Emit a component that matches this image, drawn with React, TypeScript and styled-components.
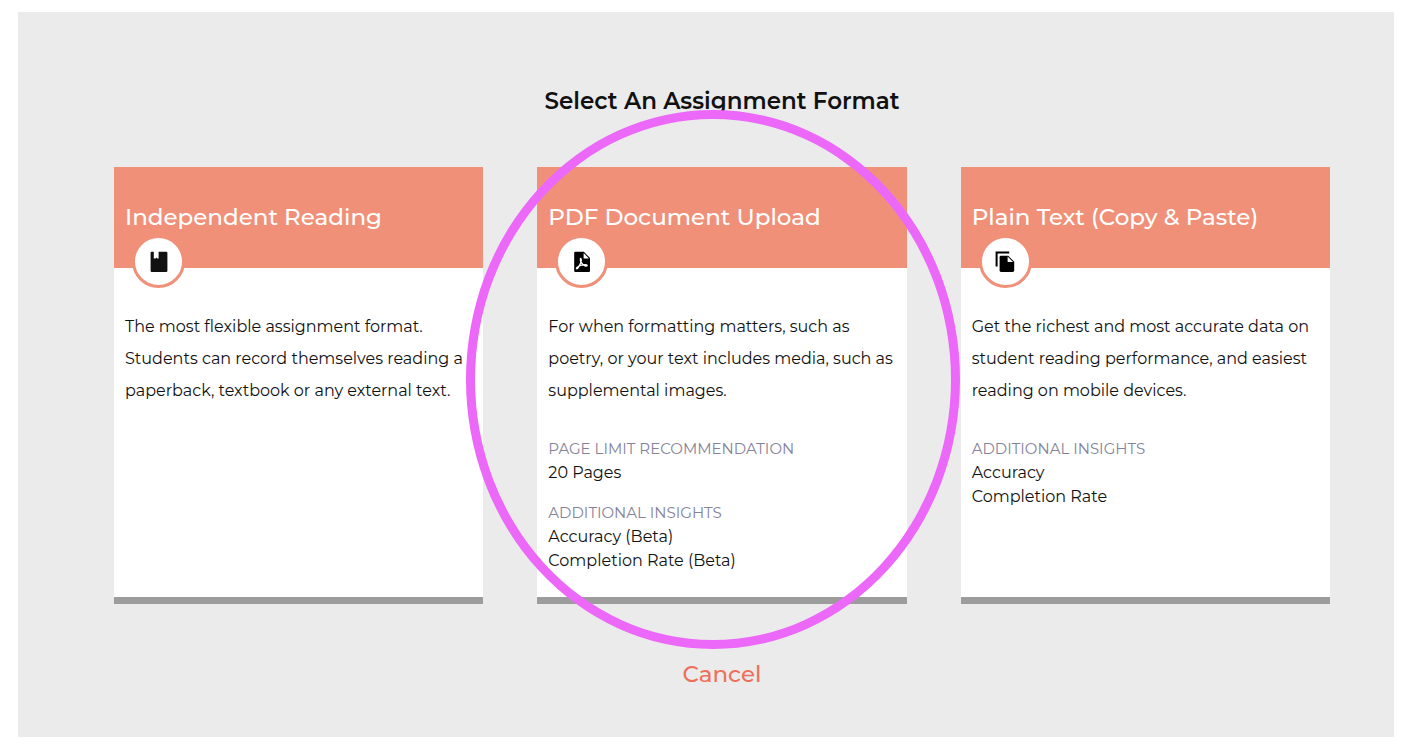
import React from 'react';
import styled, { createGlobalStyle } from 'styled-components';

const GlobalStyle = createGlobalStyle`
  * { box-sizing: border-box; }
  body {
    margin: 0;
    background: #fff;
    color: #111;
    font-family: Metropolis, Montserrat, Inter, sans-serif;
    font-size: 16px;
  }
  h1, h2, p, dl, dt, dd { margin: 0; }
`;

const Page = styled.main`
  margin: 12px 12px 11px 18px;
  padding: 73px 64px 46px 96px;
  background: #ebebeb;
`;

const Heading = styled.h1`
  font-size: 23px;
  font-weight: 600;
  line-height: 32px;
  text-align: center;
`;

const Cards = styled.div`
  display: grid;
  grid-template-columns: repeat(3, minmax(0, 1fr));
  gap: 54px;
  margin-top: 50px;
`;

const Card = styled.article`
  position: relative;
  min-height: 437px;
  background: #fff;
  border-bottom: 7px solid #9c9c9c;
`;

const CardHeader = styled.header`
  position: relative;
  height: 101px;
  padding: 34px 11px;
  background: #f19078;
  color: #fff;
`;

const CardTitle = styled.h2`
  font-size: 23px;
  font-weight: 500;
  line-height: 32px;
  white-space: nowrap;
`;

const Badge = styled.span`
  position: absolute;
  left: 18px;
  bottom: -20px;
  display: flex;
  align-items: center;
  justify-content: center;
  width: 53px;
  height: 53px;
  background: #fff;
  border: 3px solid #f19078;
  border-radius: 50%;
`;

const CardBody = styled.div`
  padding: 43px 11px 22px;
`;

const Description = styled.p`
  line-height: 32px;
`;

const Details = styled.dl`
  display: grid;
  gap: 16px;
  margin-top: 30px;
  line-height: 24px;
`;

const Term = styled.dt`
  color: #85839a;
  font-size: 15px;
  text-transform: uppercase;
`;

const Highlight = styled.span`
  position: absolute;
  z-index: 1;
  top: -57px;
  right: -53px;
  bottom: -52px;
  left: -71px;
  border: 9px solid #ec68f8;
  border-radius: 50%;
  pointer-events: none;
`;

const Cancel = styled.button`
  display: block;
  margin: 54px auto 0;
  padding: 0;
  border: 0;
  background: none;
  color: #ee705b;
  font: inherit;
  font-size: 23px;
  font-weight: 500;
  line-height: 33px;
  cursor: pointer;
`;

const BookIcon = () => (
  <svg width="18" height="22" viewBox="0 0 18 22" aria-hidden="true">
    <path
      fill="#111"
      d="M1.8 .8H3.8V7.4H5.6L6.4 6.6L7.2 7.4H8.6V.8H16.2Q17.4 .8 17.4 2V19.8Q17.4 21 16.2 21H1.8Q.6 21 .6 19.8V2Q.6 .8 1.8 .8Z"
    />
  </svg>
);

const PdfIcon = () => (
  <svg width="16" height="22" viewBox="0 0 16 22" aria-hidden="true">
    <path fill="#000" d="M1.4 .8H9.8L16 7V19.8Q16 21 14.8 21H1.4Q.2 21 .2 19.8V2Q.2 .8 1.4 .8Z" />
    <path fill="#fff" d="M9.6 2V7.4H15Z" />
    <path
      fill="none"
      stroke="#fff"
      strokeWidth="1.3"
      strokeLinecap="round"
      strokeLinejoin="round"
      d="M6.4 7.6C5.8 9.8 8 13.6 11 14.8C13 15.6 14 14.3 12.4 13.8C9.8 13.2 5.2 14.6 3.2 16.2C1.4 17.8 3 18.6 4.4 16.4C6 13.8 7.8 10.4 7.2 8.2C7 7.4 6.6 7.2 6.4 7.6Z"
    />
  </svg>
);

const CopyIcon = () => (
  <svg width="20" height="22" viewBox="0 0 20 22" aria-hidden="true">
    <path fill="none" stroke="#000" strokeWidth="2" d="M1.6 15.6V1.6H14.2" />
    <path
      fill="#000"
      d="M6 4.8H13.2L19.2 10.8V19.6Q19.2 21 17.8 21H6Q4.6 21 4.6 19.6V6.2Q4.6 4.8 6 4.8Z"
    />
    <path fill="#fff" d="M12.6 5.6V11H18Z" />
  </svg>
);

type Format = {
  title: string;
  icon: React.ReactNode;
  description: string;
  details: { term: string; values: string[] }[];
  highlighted?: boolean;
};

const formats: Format[] = [
  {
    title: 'Independent Reading',
    icon: <BookIcon />,
    description:
      'The most flexible assignment format. Students can record themselves reading a paperback, textbook or any external text.',
    details: [],
  },
  {
    title: 'PDF Document Upload',
    icon: <PdfIcon />,
    description:
      'For when formatting matters, such as poetry, or your text includes media, such as supplemental images.',
    details: [
      { term: 'Page Limit Recommendation', values: ['20 Pages'] },
      { term: 'Additional Insights', values: ['Accuracy (Beta)', 'Completion Rate (Beta)'] },
    ],
    highlighted: true,
  },
  {
    title: 'Plain Text (Copy & Paste)',
    icon: <CopyIcon />,
    description:
      'Get the richest and most accurate data on student reading performance, and easiest reading on mobile devices.',
    details: [{ term: 'Additional Insights', values: ['Accuracy', 'Completion Rate'] }],
  },
];

export default function App() {
  return (
    <>
      <GlobalStyle />
      <Page>
        <Heading>Select An Assignment Format</Heading>
        <Cards>
          {formats.map((format) => (
            <Card key={format.title}>
              <CardHeader>
                <CardTitle>{format.title}</CardTitle>
                <Badge>{format.icon}</Badge>
              </CardHeader>
              <CardBody>
                <Description>{format.description}</Description>
                {format.details.length > 0 && (
                  <Details>
                    {format.details.map((detail) => (
                      <div key={detail.term}>
                        <Term>{detail.term}</Term>
                        {detail.values.map((value) => (
                          <dd key={value}>{value}</dd>
                        ))}
                      </div>
                    ))}
                  </Details>
                )}
              </CardBody>
              {format.highlighted && <Highlight />}
            </Card>
          ))}
        </Cards>
        <Cancel type="button">Cancel</Cancel>
      </Page>
    </>
  );
}
